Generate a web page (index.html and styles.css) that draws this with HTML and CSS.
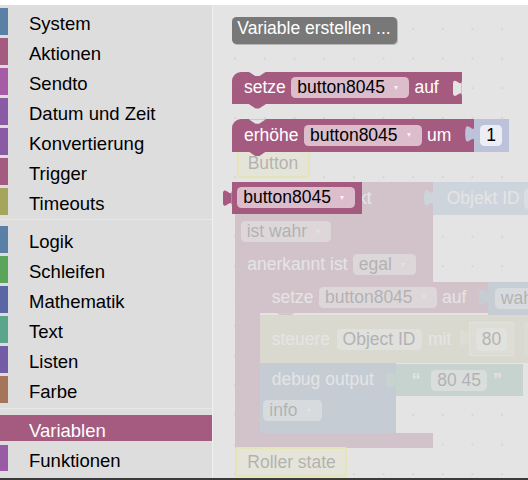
FILE: index.html
```html
<!DOCTYPE html>
<html lang="de">
<head>
<meta charset="utf-8">
<title>Blockly</title>
<link rel="stylesheet" href="styles.css">
</head>
<body>
<div class="app">
  <nav class="toolbox">
    <div class="cat"><span class="bar c-blue"></span><span class="label">System</span></div>
    <div class="cat"><span class="bar c-pink"></span><span class="label">Aktionen</span></div>
    <div class="cat"><span class="bar c-magenta"></span><span class="label">Sendto</span></div>
    <div class="cat"><span class="bar c-violet"></span><span class="label">Datum und Zeit</span></div>
    <div class="cat"><span class="bar c-violet"></span><span class="label">Konvertierung</span></div>
    <div class="cat"><span class="bar c-pink"></span><span class="label">Trigger</span></div>
    <div class="cat"><span class="bar c-olive"></span><span class="label">Timeouts</span></div>
    <div class="sep"></div>
    <div class="cat"><span class="bar c-blue"></span><span class="label">Logik</span></div>
    <div class="cat"><span class="bar c-green"></span><span class="label">Schleifen</span></div>
    <div class="cat"><span class="bar c-indigo"></span><span class="label">Mathematik</span></div>
    <div class="cat"><span class="bar c-teal"></span><span class="label">Text</span></div>
    <div class="cat"><span class="bar c-purple"></span><span class="label">Listen</span></div>
    <div class="cat"><span class="bar c-brown"></span><span class="label">Farbe</span></div>
    <div class="sep"></div>
    <div class="cat sel"><span class="bar"></span><span class="label">Variablen</span></div>
    <div class="cat"><span class="bar c-fun"></span><span class="label">Funktionen</span></div>
  </nav>

  <main class="workspace">
    <!-- workspace blocks (behind the flyout) -->
    <div class="wsb note b-button">Button</div>

    <div class="wsb on">
      <div class="on-head">
        <div class="on-r1">Falls Objekt</div>
        <div class="on-r2"><span class="field">ist wahr<i class="arrow"></i></span></div>
        <div class="on-r3"><span>anerkannt ist</span><span class="field">egal<i class="arrow"></i></span></div>
      </div>
      <div class="on-body">
        <div class="on-spine"></div>
        <div class="on-stmts">
          <div class="ib-row">
            <div class="blk ib-set"><span>setze</span><span class="field">button8045<i class="arrow"></i></span><span>auf</span><i class="nb"></i></div>
            <div class="blk ib-bool"><i class="no"></i><span class="field">wahr<i class="arrow"></i></span></div>
          </div>
          <div class="blk ib-ctl">
            <span>steuere</span><span class="field plain">Object ID</span><span>mit</span>
            <span class="ib-num"><i class="no"></i><span class="field plain">80</span></span>
            <span class="ib-slot"></span>
            <i class="nb"></i>
          </div>
          <div class="ib-row">
            <div class="blk ib-dbg">
              <div class="dbg-r1">debug output</div>
              <div class="dbg-r2"><span class="field">info<i class="arrow"></i></span></div>
              <i class="nb"></i>
            </div>
            <div class="blk ib-txt"><i class="no"></i><span class="q1">“</span><span class="field plain">80 45</span><span class="q2">”</span></div>
          </div>
        </div>
      </div>
      <div class="on-foot"><i class="nb"></i></div>
    </div>

    <div class="wsb blk oid"><i class="no"></i><span>Objekt ID</span><span class="field plain oid-f"></span></div>

    <div class="wsb note b-roller">Roller state</div>

    <!-- flyout -->
    <div class="flyout">
      <button class="fbtn" type="button">Variable erstellen ...</button>

      <div class="blk stmt f-set">
        <i class="nt"></i>
        <span>setze</span><span class="field">button8045<i class="arrow"></i></span><span>auf</span>
        <i class="ni"></i><i class="nb"></i>
      </div>

      <div class="f-row">
        <div class="blk stmt f-inc">
          <i class="nt"></i>
          <span>erhöhe</span><span class="field">button8045<i class="arrow"></i></span><span>um</span>
          <i class="ni ni-num"></i><i class="nb"></i>
        </div>
        <div class="blk num"><span class="field nfield">1</span></div>
      </div>

      <div class="blk get">
        <i class="no"></i>
        <span class="field">button8045<i class="arrow"></i></span>
      </div>
    </div>
  </main>
</div>
<div class="bottom-line"></div>
</body>
</html>
```

FILE: styles.css
```css
* { box-sizing: border-box; }

html, body {
  margin: 0;
  padding: 0;
  background: #fff;
  font-family: "Liberation Sans", Arial, sans-serif;
  overflow: hidden;
}

.app {
  display: flex;
  height: 473px;
  margin-top: 5px;
}

.bottom-line {
  height: 2px;
  background: #3a3a3a;
}

/* ---------- toolbox ---------- */
.toolbox {
  width: 213px;
  flex-shrink: 0;
  display: flex;
  flex-direction: column;
  background: #ddd;
  border-right: 1px solid #efefef;
  padding-top: 3.3px;
}

.cat {
  display: flex;
  flex-shrink: 0;
  height: 26.7px;
  margin-bottom: 3.25px;
}

.bar {
  width: 8px;
  flex-shrink: 0;
}

.label {
  padding-left: 21px;
  padding-top: 5px;
  font-size: 18.5px;
  line-height: 22px;
  color: #000;
  white-space: nowrap;
}

.cat.sel { background: #a55b80; }
.cat.sel .label { color: #fff; }

.sep {
  flex-shrink: 0;
  height: 1px;
  background: #e7e7e7;
  margin: 1.5px 0 6.1px;
}

.c-blue { background: #5b80a5; }
.c-pink { background: #a55b80; }
.c-magenta { background: #a55ba5; }
.c-violet { background: #8a5ba5; }
.c-olive { background: #a5a55b; }
.c-green { background: #5ba55b; }
.c-indigo { background: #5b67a5; }
.c-teal { background: #5ba58c; }
.c-purple { background: #745ba5; }
.c-brown { background: #a5745b; }
.c-fun { background: #995ba5; }

/* ---------- workspace ---------- */
.workspace {
  flex: 1;
  position: relative;
  overflow: hidden;
  background-color: #fff;
  background-image: radial-gradient(circle, #b4b4b4 0.9px, transparent 1.4px);
  background-size: 29.7px 29.7px;
  background-position: 7.2px 9px;
  font-size: 17.5px;
}

.wsb { position: absolute; }

/* generic block */
.blk {
  position: relative;
  display: flex;
  align-items: center;
  background: #a55b80;
  color: #fff;
  font-size: 17.5px;
  white-space: nowrap;
}

.field {
  display: inline-flex;
  align-items: center;
  height: 21px;
  padding: 0 11px 0 6px;
  background: rgba(255, 255, 255, 0.6);
  color: #000;
  border-radius: 4.6px;
  white-space: nowrap;
}
.field.plain { padding: 0 6px; }

.arrow {
  display: inline-block;
  margin-left: 9px;
  width: 0;
  height: 0;
  border-left: 2.6px solid transparent;
  border-right: 2.6px solid transparent;
  border-top: 4px solid rgba(255, 255, 255, 0.8);
}

/* connection shapes */
.nt, .nb, .ni, .no {
  position: absolute;
  display: block;
}
.nt {
  left: 17px;
  top: 0;
  width: 17.3px;
  height: 4.6px;
  background: #e4e4e4;
  clip-path: polygon(0 0, 100% 0, 60% 100%, 40% 100%);
}
.nb {
  left: 17px;
  top: 100%;
  width: 17.3px;
  height: 4.6px;
  background: inherit;
  clip-path: polygon(0 0, 100% 0, 60% 100%, 40% 100%);
}
.ni {
  right: 0;
  top: 7.5px;
  width: 9.2px;
  height: 17.25px;
  background: #e4e4e4;
  clip-path: path('M 9.2 0 C 9.2 11.5 0 -9.2 0 8.625 S 9.2 5.75 9.2 17.25 Z');
}
.no {
  left: -9.2px;
  top: 7px;
  width: 9.2px;
  height: 17.25px;
  background: inherit;
  clip-path: path('M 9.2 0 C 9.2 11.5 0 -9.2 0 8.625 S 9.2 5.75 9.2 17.25 Z');
}

/* yellow note blocks */
.note {
  height: 30px;
  border: 2px solid #ffff22;
  background: #ffffc4;
  color: #000;
  border-radius: 2px;
  line-height: 26px;
  white-space: nowrap;
}
.b-button { left: 23.7px; top: 143.3px; padding: 0 10px 0 9px; }
.b-roller { left: 22.3px; top: 441.7px; padding: 0 9.5px 0 10px; }

/* big trigger block */
.on {
  left: 22.3px;
  top: 177.3px;
  width: 198px;
  color: #fff;
}
.on-head {
  background: #a55b80;
  border-top-left-radius: 9px;
  height: 99.4px;
}
.on-r1 {
  height: 32.7px;
  display: flex;
  align-items: center;
  padding-left: 44px;
}
.on-r2 {
  height: 33.3px;
  display: flex;
  align-items: center;
  padding-left: 5.4px;
}
.on-r3 {
  height: 33.4px;
  display: flex;
  align-items: center;
  gap: 5.2px;
  padding-left: 12px;
}
.on-body { display: flex; }
.on-spine { width: 24.7px; flex-shrink: 0; background: #a55b80; }
.on-stmts {
  display: flex;
  flex-direction: column;
  align-items: flex-start;
}
.on-foot {
  position: relative;
  height: 15px;
  background: #a55b80;
}

.ib-row { display: flex; align-items: flex-start; }

.ib-set {
  height: 31.6px;
  gap: 5.5px;
  padding: 0 21.7px 0 11.7px;
}
.ib-bool {
  height: 33.3px;
  background: #6b8db0;
  padding: 0 30px 0 6.7px;
}

.ib-ctl {
  height: 48.4px;
  width: 300px;
  gap: 6.5px;
  padding-left: 11.7px;
  background-color: #c9c99a;
}
.ib-num {
  position: relative;
  display: flex;
  align-items: center;
  margin-left: 11px;
  height: 34.3px;
  padding: 0 7px;
  background: #dcdcb4;
  box-shadow: inset 0 0 0 1px #ececd6;
}
.ib-num .field { height: 22.7px; }
.ib-slot {
  width: 10px;
  height: 34px;
  margin-left: 3px;
  background: #d6d6b0;
}

.ib-dbg {
  flex-direction: column;
  align-items: flex-start;
  height: 69.3px;
  width: 135.7px;
  background: #6388ab;
}
.dbg-r1 {
  height: 32.3px;
  display: flex;
  align-items: center;
  padding-left: 11.7px;
}
.dbg-r2 {
  display: flex;
  align-items: center;
  height: 30px;
  padding-left: 3.3px;
}
.ib-txt {
  height: 31.3px;
  margin-top: 1px;
  background: #6fa898;
  padding: 0 21px 0 16px;
}
.q1 { margin-right: 10.8px; font-weight: bold; }
.q2 { margin-left: 5.9px; font-weight: bold; }

.oid {
  left: 220.3px;
  top: 177.3px;
  height: 32.7px;
  width: 140px;
  padding-left: 13.4px;
  background: #8fb0cf;
}
.oid-f { margin-left: 4.4px; width: 40px; }

/* ---------- flyout ---------- */
.flyout {
  position: absolute;
  inset: 0;
  background: rgba(221, 221, 221, 0.8);
  display: flex;
  flex-direction: column;
  align-items: flex-start;
  padding: 12.3px 0 0 18.7px;
}

.fbtn {
  height: 26.7px;
  margin: 0;
  border: 0;
  border-radius: 4.6px;
  padding: 0 6.7px 4.7px 5.6px;
  background: #787878;
  color: #fff;
  font-family: "Liberation Sans", Arial, sans-serif;
  font-size: 17.5px;
  line-height: 22px;
  white-space: nowrap;
  box-shadow: 1px 1px 0 rgba(0, 0, 0, 0.2);
}

.stmt {
  height: 32.3px;
  gap: 5.5px;
  padding: 0 23px 0 12.3px;
  border-top-left-radius: 9px;
}
.f-set { margin-top: 27.7px; }
.f-set .ni { top: 8px; }

.f-row {
  display: flex;
  margin-top: 15.3px;
}
.ni-num { background: #bdc2db; top: 6px; }

.num {
  height: 32.3px;
  background: #bdc2db;
  padding: 0 6.6px 0 5.7px;
}
.nfield {
  padding: 0 6.1px;
  background: rgba(255, 255, 255, 0.72);
  color: #000;
}

.get {
  margin-top: 30px;
  height: 32.3px;
  padding: 0 6.7px 0 5.6px;
}
.get .no { top: 8px; }
```
